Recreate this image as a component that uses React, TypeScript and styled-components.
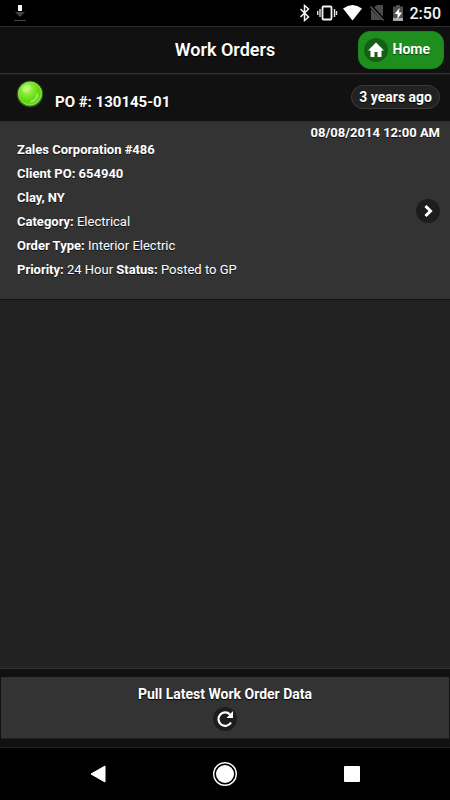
import React from "react";
import styled, { createGlobalStyle, css } from "styled-components";

const GlobalStyle = createGlobalStyle`
  * { box-sizing: border-box; }
  body {
    margin: 0;
    background: #222;
    color: #fff;
    font-family: Roboto, "Liberation Sans", sans-serif;
  }
  h1, h2, p { margin: 0; }
  svg { display: block; flex: none; }
`;

const Screen = styled.div`
  min-height: 100vh;
  display: flex;
  flex-direction: column;
`;

const StatusBar = styled.div`
  height: 26px;
  padding: 0 9px 0 13px;
  display: flex;
  align-items: center;
  justify-content: space-between;
  background: #000;
`;

const StatusIcons = styled.div`
  display: flex;
  align-items: center;
`;

const Clock = styled.time`
  margin-left: 6px;
  padding-top: 2px;
  font-size: 16px;
  line-height: 24px;
  font-weight: 500;
  color: #f5f5f5;
`;

const Header = styled.header`
  height: 48px;
  padding: 0 6px;
  display: grid;
  grid-template-columns: 1fr auto 1fr;
  align-items: center;
  background: #111;
  border-top: 1px solid #2c2c2c;
  border-bottom: 1px solid #333;
`;

const Title = styled.h1`
  grid-column: 2;
  font-size: 18px;
  line-height: 24px;
  font-weight: 600;
  text-shadow: 0 1px 0 #000;
`;

const HomeButton = styled.button`
  grid-column: 3;
  justify-self: end;
  height: 38px;
  padding: 0 13px 0 5px;
  display: flex;
  align-items: center;
  gap: 5px;
  border: 1px solid #1c841c;
  border-radius: 12px;
  background: #1e8f1e;
  color: #fff;
  font: 700 14px/20px Roboto, "Liberation Sans", sans-serif;
  text-shadow: 0 1px 1px #064006;
  cursor: pointer;
`;

const Disc = styled.span<{ $tone?: "green" }>`
  width: 24px;
  height: 24px;
  flex: none;
  display: flex;
  align-items: center;
  justify-content: center;
  border-radius: 50%;
  background: ${(p) => (p.$tone === "green" ? "#145f14" : "#1d1d1d")};
`;

const HomeLabel = styled.span`
  padding-bottom: 2px;
`;

const OrderHeading = styled.div`
  height: 48px;
  padding: 0 10px 3px 16px;
  display: flex;
  align-items: center;
  justify-content: space-between;
  background: #111;
  border-top: 1px solid #1d1d1d;
  border-bottom: 1px solid #2a2a2a;
`;

const OrderName = styled.div`
  display: flex;
  align-items: flex-start;
  gap: 11px;
  padding-bottom: 2px;
`;

const OrderNumber = styled.h2`
  padding-top: 12px;
  font-size: 15px;
  line-height: 20px;
  font-weight: 700;
  text-shadow: 0 1px 0 #000;
`;

const Age = styled.span`
  padding: 0 7px;
  border: 1px solid #3a3a3a;
  border-radius: 12px;
  background: #222;
  font-size: 14px;
  line-height: 22px;
  font-weight: 700;
  text-shadow: 0 1px 0 #000;
`;

const Order = styled.a`
  height: 178px;
  padding: 0 10px 0 17px;
  display: flex;
  align-items: center;
  justify-content: space-between;
  background: #333;
  border-bottom: 1px solid #111;
  color: #fff;
  text-decoration: none;
  font-size: 13px;
  line-height: 24px;
  text-shadow: 0 1px 0 #111;
`;

const Details = styled.div`
  flex: 1;
  height: 100%;
  display: flex;
  flex-direction: column;
`;

const Stamp = styled.p`
  align-self: flex-end;
  margin-right: -24px;
  line-height: 16px;
  padding-top: 3px;
  height: 16px;
  font-weight: 700;
`;

const Line = styled.p`
  white-space: nowrap;
  b { font-weight: 700; }
`;

const Content = styled.main`
  flex: 1;
  background: #222;
`;

const bar = css`
  background: #111;
  border-top: 1px solid #333;
  border-bottom: 1px solid #242424;
`;

const Footer = styled.footer`
  ${bar}
  height: 80px;
  padding: 8px 1px;
`;

const PullButton = styled.button`
  width: 100%;
  height: 62px;
  padding: 0 0 1px;
  display: flex;
  flex-direction: column;
  align-items: center;
  justify-content: center;
  gap: 3px;
  border: 0;
  border-bottom: 1px solid #222;
  background: #333;
  color: #fff;
  font: 700 14px/20px Roboto, "Liberation Sans", sans-serif;
  text-shadow: 0 1px 1px #000;
  cursor: pointer;
`;

const SystemNav = styled.nav`
  height: 52px;
  padding: 0 35px;
  display: grid;
  grid-template-columns: repeat(3, 1fr);
  background: #000;
`;

const NavButton = styled.button`
  display: flex;
  align-items: center;
  justify-content: center;
  padding: 0;
  border: 0;
  background: none;
  color: #fff;
`;

const DownloadIcon = () => (
  <svg width="14" height="18" viewBox="0 0 14 18">
    <path d="M5 1h4v6H5z" fill="#f5f5f5" />
    <path d="M2 8h10l-5 5z" fill="#444" />
    <path d="M1 16h12v1H1z" fill="#444" />
  </svg>
);

const SystemIcons = () => (
  <svg width="105" height="18" viewBox="299 4 105 18" fill="none">
    <path d="m300.500 9 8 8-4 3.500V5.500L308.500 9l-8 8" stroke="#f5f5f5" strokeWidth="1.500" />
    <rect x="322.500" y="6.500" width="9" height="13" rx="1" stroke="#f5f5f5" strokeWidth="1.800" />
    <path d="M320 9v8M334.500 9v8M317.700 11v4M336.500 11v4" stroke="#e8e8e8" strokeWidth="1.400" />
    <path d="M343 8.500Q352.500 1.500 362 8.500L352.500 20.500z" fill="#fff" />
    <path d="M371 9v11h11zM374 7l3-2h6v12z" fill="#4a4a4a" />
    <path d="m370.500 6.500 13 14" stroke="#606060" strokeWidth="1.300" />
    <path d="M393 6.500h3V5h4v1.500h3V18h-10z" fill="#505050" />
    <path d="M393 18h10v3h-10z" fill="#aaa" />
    <path d="m399.500 8-5 6h3v5l4.500-6.500h-3z" fill="#fff" />
  </svg>
);

const HomeIcon = () => (
  <svg width="18" height="18" viewBox="0 0 18 18">
    <path d="M9 1.500 1 9.500h2.500V16H7.500v-5h3v5h4V9.500H17z" fill="#fff" />
  </svg>
);

const StatusOrb = () => (
  <svg width="28" height="28" viewBox="0 0 28 28">
    <defs>
      <radialGradient id="orb" cx="38%" cy="32%" r="68%">
        <stop offset="0" stopColor="#b5f66b" />
        <stop offset=".4" stopColor="#80e92d" />
        <stop offset=".8" stopColor="#5bd50c" />
        <stop offset="1" stopColor="#73dc2c" />
      </radialGradient>
      <radialGradient id="rim">
        <stop offset=".85" stopColor="#468d18" />
        <stop offset="1" stopColor="#468d18" stopOpacity="0" />
      </radialGradient>
    </defs>
    <circle cx="14" cy="14" r="13.800" fill="url(#rim)" />
    <circle cx="14" cy="13.500" r="11.500" fill="url(#orb)" stroke="#8be44c" />
    <ellipse cx="10.500" cy="8.500" rx="5" ry="3.500" fill="#cbff91" opacity=".5" transform="rotate(-35 10.500 8.500)" />
    <path d="M15 21.500Q21 20 21.500 14" fill="none" stroke="#c9f99e" strokeWidth="1.600" strokeLinecap="round" opacity=".7" />
  </svg>
);

const ChevronIcon = () => (
  <svg width="18" height="18" viewBox="0 0 18 18">
    <path d="m6.500 4 5 5-5 5" fill="none" stroke="#fff" strokeWidth="3" />
  </svg>
);

const RefreshIcon = () => (
  <svg width="18" height="18" viewBox="0 0 18 18">
    <path d="M14 4.500A6.700 6.700 0 1 0 15 12.500" fill="none" stroke="#fff" strokeWidth="2.200" />
    <path d="M17 1V8h-6.500z" fill="#fff" />
  </svg>
);

const details = [
  [["Zales Corporation #486", ""]],
  [["Client PO: 654940", ""]],
  [["Clay, NY", ""]],
  [["Category:", "Electrical"]],
  [["Order Type:", "Interior Electric"]],
  [["Priority:", "24 Hour"], ["Status:", "Posted to GP"]],
];

export default function App() {
  return (
    <>
      <GlobalStyle />
      <Screen>
        <StatusBar>
          <DownloadIcon />
          <StatusIcons>
            <SystemIcons />
            <Clock>2:50</Clock>
          </StatusIcons>
        </StatusBar>
        <Header>
          <Title>Work Orders</Title>
          <HomeButton>
            <Disc $tone="green"><HomeIcon /></Disc>
            <HomeLabel>Home</HomeLabel>
          </HomeButton>
        </Header>
        <Content>
          <OrderHeading>
            <OrderName>
              <StatusOrb />
              <OrderNumber>PO #: 130145-01</OrderNumber>
            </OrderName>
            <Age>3 years ago</Age>
          </OrderHeading>
          <Order href="#order">
            <Details>
              <Stamp>08/08/2014 12:00 AM</Stamp>
              {details.map((line) => (
                <Line key={line[0][0]}>
                  {line.map(([label, value]) => (
                    <React.Fragment key={label}>
                      <b>{label}</b> {value}{" "}
                    </React.Fragment>
                  ))}
                </Line>
              ))}
            </Details>
            <Disc><ChevronIcon /></Disc>
          </Order>
        </Content>
        <Footer>
          <PullButton>
            Pull Latest Work Order Data
            <Disc><RefreshIcon /></Disc>
          </PullButton>
        </Footer>
        <SystemNav>
          <NavButton aria-label="Back">
            <svg width="18" height="20" viewBox="0 0 18 20">
              <path d="M2 10 16 2v16z" fill="currentColor" stroke="currentColor" strokeLinejoin="round" />
            </svg>
          </NavButton>
          <NavButton aria-label="Home screen">
            <svg width="24" height="24" viewBox="0 0 24 24">
              <circle cx="12" cy="12" r="11.300" fill="none" stroke="currentColor" strokeWidth="1.400" />
              <circle cx="12" cy="12" r="9" fill="currentColor" />
            </svg>
          </NavButton>
          <NavButton aria-label="Recent apps">
            <svg width="18" height="18" viewBox="0 0 18 18">
              <rect x="1" y="1" width="16" height="16" rx="1" fill="currentColor" />
            </svg>
          </NavButton>
        </SystemNav>
      </Screen>
    </>
  );
}
